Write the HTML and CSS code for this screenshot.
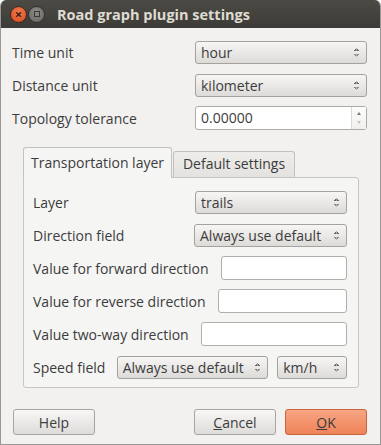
FILE: index.html
```html
<!DOCTYPE html>
<html lang="en">
<head>
<meta charset="UTF-8">
<meta name="viewport" content="width=device-width, initial-scale=1.0">
<title>Road graph plugin settings</title>
<link rel="stylesheet" href="styles.css">
</head>
<body>
<div class="window">
  <div class="titlebar">
    <span class="winbtn close">&#215;</span>
    <span class="winbtn minimize"><i></i></span>
    <span class="title">Road graph plugin settings</span>
  </div>

  <div class="content">
    <div class="form-row">
      <label>Time unit</label>
      <div class="combo wide">hour</div>
    </div>
    <div class="form-row">
      <label>Distance unit</label>
      <div class="combo wide">kilometer</div>
    </div>
    <div class="form-row">
      <label>Topology tolerance</label>
      <div class="spinbox">
        <span class="spin-value">0.00000</span>
        <span class="spin-arrows"><i class="up"></i><i class="down"></i></span>
      </div>
    </div>

    <div class="tabs">
      <div class="tab active">Transportation layer</div>
      <div class="tab">Default settings</div>
    </div>
    <div class="tab-panel">
      <div class="form-row">
        <label>Layer</label>
        <div class="combo w152">trails</div>
      </div>
      <div class="form-row">
        <label>Direction field</label>
        <div class="combo w153">Always use default</div>
      </div>
      <div class="form-row">
        <label>Value for forward direction</label>
        <input type="text" class="field w126">
      </div>
      <div class="form-row">
        <label>Value for reverse direction</label>
        <input type="text" class="field w129">
      </div>
      <div class="form-row">
        <label>Value two-way direction</label>
        <input type="text" class="field w146">
      </div>
      <div class="form-row speed-row">
        <label>Speed field</label>
        <div class="combo w152">Always use default</div>
        <div class="combo w70">km/h</div>
      </div>
    </div>

    <div class="buttons">
      <button type="button">Help</button>
      <span class="spacer"></span>
      <button type="button"><u>C</u>ancel</button>
      <button type="button" class="ok"><u>O</u>K</button>
    </div>
  </div>
</div>
</body>
</html>
```

FILE: styles.css
```css
body {
  margin: 0;
  padding: 0;
  background-color: #fff;
  font-family: "Open Sans", "Noto Sans", sans-serif;
  font-size: 14px;
  color: #3c3c3c;
}

.window {
  width: 381px;
  height: 445px;
  box-sizing: border-box;
  background-color: #f2f1f0;
  border: 1px solid #9a9894;
  border-top: none;
  border-radius: 6px 6px 0 0;
  overflow: hidden;
}

.titlebar {
  height: 28px;
  background: linear-gradient(#4b4a45, #3c3b37);
  display: flex;
  align-items: center;
  padding-left: 10px;
  margin: 0 -1px;
}

.winbtn {
  width: 17px;
  height: 17px;
  border-radius: 50%;
  box-sizing: border-box;
  display: flex;
  align-items: center;
  justify-content: center;
  margin-right: 1px;
}

.close {
  background: radial-gradient(circle at 50% 35%, #f47a4f, #d8491c);
  border: 1px solid #3a2a22;
  color: #3b1e12;
  font-size: 13px;
  line-height: 1;
  font-weight: bold;
}

.minimize {
  background: radial-gradient(circle at 50% 35%, #8d8b86, #67655f);
  border: 1px solid #33322e;
}

.minimize i {
  width: 6px;
  height: 6px;
  border: 1px solid #3a3935;
  box-sizing: border-box;
}

.title {
  margin-left: 11px;
  font-family: "Open Sans", sans-serif;
  font-weight: bold;
  font-size: 14.5px;
  color: #dfdbd2;
}

.content {
  padding: 12px 13px 0 11px;
}

.form-row {
  height: 24px;
  display: flex;
  align-items: center;
  justify-content: space-between;
  margin-bottom: 9px;
}

.form-row label {
  white-space: nowrap;
}

.combo {
  position: relative;
  height: 23px;
  box-sizing: border-box;
  border: 1px solid #a5a29d;
  border-radius: 3px;
  background: linear-gradient(#f7f6f5, #dddbd8);
  padding-left: 5px;
  line-height: 21px;
  white-space: nowrap;
}

.combo::after {
  content: "";
  position: absolute;
  right: 7px;
  top: 6px;
  width: 5px;
  height: 9px;
  background:
    linear-gradient(to bottom right, transparent 50%, #6a6862 50%) left top / 50% 3px no-repeat,
    linear-gradient(to bottom left, transparent 50%, #6a6862 50%) right top / 50% 3px no-repeat,
    linear-gradient(to top right, transparent 50%, #8a8883 50%) left bottom / 50% 3px no-repeat,
    linear-gradient(to top left, transparent 50%, #8a8883 50%) right bottom / 50% 3px no-repeat;
}

.wide { width: 172px; }
.w152 { width: 152px; }
.w153 { width: 153px; }
.w70 { width: 70px; }

.spinbox {
  width: 172px;
  height: 24px;
  box-sizing: border-box;
  border: 1px solid #aeaba6;
  border-radius: 3px;
  background-color: #fff;
  display: flex;
}

.spin-value {
  flex: 1;
  padding-left: 5px;
  line-height: 22px;
}

.spin-arrows {
  width: 14px;
  border-left: 1px solid #dad8d5;
  background: linear-gradient(#fdfdfd, #f0efee);
  display: flex;
  flex-direction: column;
  align-items: center;
  justify-content: center;
  gap: 6px;
}

.spin-arrows i {
  width: 0;
  height: 0;
  border-left: 2.5px solid transparent;
  border-right: 2.5px solid transparent;
}

.spin-arrows .up {
  border-bottom: 3px solid #7a7873;
}

.spin-arrows .down {
  border-top: 3px solid #c4c2be;
}

.tabs {
  display: flex;
  align-items: flex-end;
  margin-top: 17px;
  margin-left: 11px;
  height: 30px;
}

.tab {
  box-sizing: border-box;
  height: 26px;
  border: 1px solid #c3c1bd;
  border-bottom: none;
  border-radius: 3px 3px 0 0;
  background: linear-gradient(#eeedeb, #e4e2df);
  line-height: 24px;
  padding: 0;
  width: 122px;
  margin-left: 1px;
  text-align: center;
  white-space: nowrap;
}

.tab.active {
  height: 31px;
  width: 149px;
  margin-left: 0;
  margin-bottom: -1px;
  background-color: #f5f5f4;
  background-image: none;
  line-height: 30px;
  position: relative;
  z-index: 1;
}

.tab-panel {
  margin: 0 8px 0 11px;
  height: 211px;
  box-sizing: border-box;
  border: 1px solid #c8c6c2;
  border-radius: 0 3px 3px 3px;
  background-color: #f5f5f4;
  padding: 12px 11px 0 9px;
}

.field {
  height: 24px;
  box-sizing: border-box;
  border: 1px solid #b2afaa;
  border-radius: 3px;
  background-color: #fff;
}

.w126 { width: 126px; }
.w129 { width: 129px; }
.w146 { width: 146px; }

.speed-row {
  justify-content: flex-start;
  gap: 9px;
}

.speed-row label {
  width: 75px;
}

.buttons {
  display: flex;
  margin-top: 21px;
  gap: 9px;
  padding-left: 1px;
}

.spacer {
  flex: 1;
}

button {
  width: 82px;
  height: 26px;
  box-sizing: border-box;
  border: 1px solid #a8a5a0;
  border-radius: 3px;
  background: linear-gradient(#f8f7f6, #dedcd9);
  font-family: inherit;
  font-size: 14px;
  color: #3c3c3c;
  padding: 0;
}

button.ok {
  border-color: #c9643f;
  background: linear-gradient(#f7a584, #ef8358);
}
```
